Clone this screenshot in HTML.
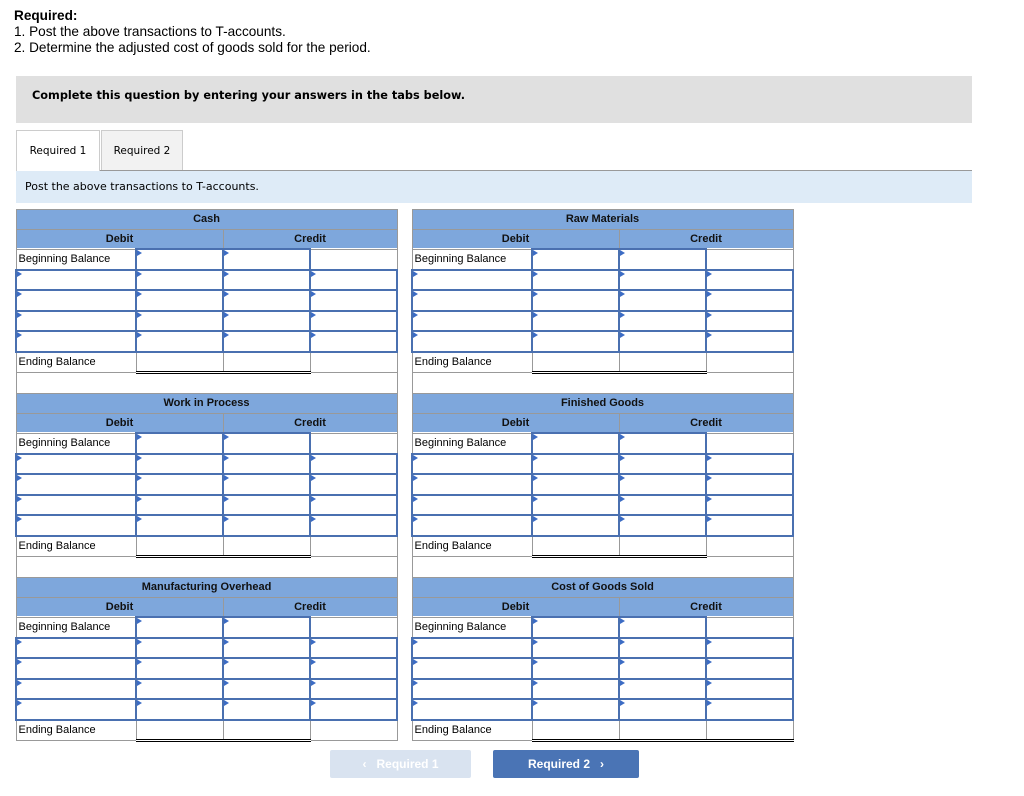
<!DOCTYPE html>
<html><head><meta charset="utf-8"><style>
body{margin:0;background:#fff;font-family:"Liberation Sans",Arial,sans-serif;color:#000;width:1024px;height:796px;position:relative;overflow:hidden}
.top{position:absolute;left:14px;top:8px;font-size:13.6px;line-height:16px}
.banner{position:absolute;left:16px;top:76px;width:956px;height:47px;background:#e0e0e0;font-family:"DejaVu Sans",sans-serif;font-weight:bold;font-size:11.3px;line-height:40px;text-indent:16px}
.tab{position:absolute;top:130px;height:41px;font-family:"DejaVu Sans",sans-serif;font-size:10.5px;line-height:41px;text-align:center;border:1px solid #ccc;border-bottom:none;box-sizing:border-box}
.tabline{position:absolute;left:16px;top:170px;width:956px;height:1px;background:#999}
.post{position:absolute;left:16px;top:171px;width:956px;height:32px;background:#deebf7;font-family:"DejaVu Sans",sans-serif;font-size:11px;line-height:32px;text-indent:9px}
table.t{position:absolute;width:381px;border-collapse:collapse;table-layout:fixed;font-size:11px}
table.t td{height:18.5px;line-height:18px;border:1px solid #999;padding:0 2px;white-space:nowrap;overflow:hidden}
td.h{background:#7ea7dc;font-weight:bold;text-align:center;color:#111}
td.i{border:2px solid #4a70b0!important;position:relative;background:#fff}
td.i::before{content:"";position:absolute;left:0;top:0;border-left:5px solid #3c6cc4;border-top:3px solid transparent;border-bottom:3px solid transparent}
td.d{border-bottom:3px double #000!important}
.btn{position:absolute;top:750px;height:28px;font-size:12px;font-weight:bold;color:#fff;text-align:center;line-height:28px;border-radius:2px}
</style></head><body>
<div class="top"><b>Required:</b><br>1. Post the above transactions to T-accounts.<br>2. Determine the adjusted cost of goods sold for the period.</div>
<div class="banner">Complete this question by entering your answers in the tabs below.</div>
<div class="tab" style="left:16px;width:84px;background:#fff;height:42px">Required 1</div>
<div class="tab" style="left:101px;width:82px;background:#f2f2f2">Required 2</div>
<div class="tabline" style="left:100px;width:872px"></div>
<div class="post">Post the above transactions to T-accounts.</div>

<table class="t" style="left:15px;top:209px"><colgroup><col style="width:120px"><col style="width:87px"><col style="width:87px"><col style="width:87px"></colgroup>
<tr><td class="h" colspan="4">Cash</td></tr>
<tr><td class="h" colspan="2">Debit</td><td class="h" colspan="2">Credit</td></tr>
<tr><td>Beginning Balance</td><td class="i"></td><td class="i"></td><td></td></tr>
<tr><td class="i"></td><td class="i"></td><td class="i"></td><td class="i"></td></tr>
<tr><td class="i"></td><td class="i"></td><td class="i"></td><td class="i"></td></tr>
<tr><td class="i"></td><td class="i"></td><td class="i"></td><td class="i"></td></tr>
<tr><td class="i"></td><td class="i"></td><td class="i"></td><td class="i"></td></tr>
<tr><td>Ending Balance</td><td class="d"></td><td class="d"></td><td></td></tr>
<tr><td colspan="4"></td></tr></table>

<table class="t" style="left:411px;top:209px"><colgroup><col style="width:120px"><col style="width:87px"><col style="width:87px"><col style="width:87px"></colgroup>
<tr><td class="h" colspan="4">Raw Materials</td></tr>
<tr><td class="h" colspan="2">Debit</td><td class="h" colspan="2">Credit</td></tr>
<tr><td>Beginning Balance</td><td class="i"></td><td class="i"></td><td></td></tr>
<tr><td class="i"></td><td class="i"></td><td class="i"></td><td class="i"></td></tr>
<tr><td class="i"></td><td class="i"></td><td class="i"></td><td class="i"></td></tr>
<tr><td class="i"></td><td class="i"></td><td class="i"></td><td class="i"></td></tr>
<tr><td class="i"></td><td class="i"></td><td class="i"></td><td class="i"></td></tr>
<tr><td>Ending Balance</td><td class="d"></td><td class="d"></td><td></td></tr>
<tr><td colspan="4"></td></tr></table>

<table class="t" style="left:15px;top:393px"><colgroup><col style="width:120px"><col style="width:87px"><col style="width:87px"><col style="width:87px"></colgroup>
<tr><td class="h" colspan="4">Work in Process</td></tr>
<tr><td class="h" colspan="2">Debit</td><td class="h" colspan="2">Credit</td></tr>
<tr><td>Beginning Balance</td><td class="i"></td><td class="i"></td><td></td></tr>
<tr><td class="i"></td><td class="i"></td><td class="i"></td><td class="i"></td></tr>
<tr><td class="i"></td><td class="i"></td><td class="i"></td><td class="i"></td></tr>
<tr><td class="i"></td><td class="i"></td><td class="i"></td><td class="i"></td></tr>
<tr><td class="i"></td><td class="i"></td><td class="i"></td><td class="i"></td></tr>
<tr><td>Ending Balance</td><td class="d"></td><td class="d"></td><td></td></tr>
<tr><td colspan="4"></td></tr></table>

<table class="t" style="left:411px;top:393px"><colgroup><col style="width:120px"><col style="width:87px"><col style="width:87px"><col style="width:87px"></colgroup>
<tr><td class="h" colspan="4">Finished Goods</td></tr>
<tr><td class="h" colspan="2">Debit</td><td class="h" colspan="2">Credit</td></tr>
<tr><td>Beginning Balance</td><td class="i"></td><td class="i"></td><td></td></tr>
<tr><td class="i"></td><td class="i"></td><td class="i"></td><td class="i"></td></tr>
<tr><td class="i"></td><td class="i"></td><td class="i"></td><td class="i"></td></tr>
<tr><td class="i"></td><td class="i"></td><td class="i"></td><td class="i"></td></tr>
<tr><td class="i"></td><td class="i"></td><td class="i"></td><td class="i"></td></tr>
<tr><td>Ending Balance</td><td class="d"></td><td class="d"></td><td></td></tr>
<tr><td colspan="4"></td></tr></table>

<table class="t" style="left:15px;top:577px"><colgroup><col style="width:120px"><col style="width:87px"><col style="width:87px"><col style="width:87px"></colgroup>
<tr><td class="h" colspan="4">Manufacturing Overhead</td></tr>
<tr><td class="h" colspan="2">Debit</td><td class="h" colspan="2">Credit</td></tr>
<tr><td>Beginning Balance</td><td class="i"></td><td class="i"></td><td></td></tr>
<tr><td class="i"></td><td class="i"></td><td class="i"></td><td class="i"></td></tr>
<tr><td class="i"></td><td class="i"></td><td class="i"></td><td class="i"></td></tr>
<tr><td class="i"></td><td class="i"></td><td class="i"></td><td class="i"></td></tr>
<tr><td class="i"></td><td class="i"></td><td class="i"></td><td class="i"></td></tr>
<tr><td>Ending Balance</td><td class="d"></td><td class="d"></td><td></td></tr></table>

<table class="t" style="left:411px;top:577px"><colgroup><col style="width:120px"><col style="width:87px"><col style="width:87px"><col style="width:87px"></colgroup>
<tr><td class="h" colspan="4">Cost of Goods Sold</td></tr>
<tr><td class="h" colspan="2">Debit</td><td class="h" colspan="2">Credit</td></tr>
<tr><td>Beginning Balance</td><td class="i"></td><td class="i"></td><td></td></tr>
<tr><td class="i"></td><td class="i"></td><td class="i"></td><td class="i"></td></tr>
<tr><td class="i"></td><td class="i"></td><td class="i"></td><td class="i"></td></tr>
<tr><td class="i"></td><td class="i"></td><td class="i"></td><td class="i"></td></tr>
<tr><td class="i"></td><td class="i"></td><td class="i"></td><td class="i"></td></tr>
<tr><td>Ending Balance</td><td class="d"></td><td class="d"></td><td class="d"></td></tr></table>

<div class="btn" style="left:330px;width:141px;background:#d9e3f0">&lsaquo;&nbsp;&nbsp; Required 1</div>
<div class="btn" style="left:493px;width:146px;background:#4a74b5">Required 2 &nbsp;&nbsp;&rsaquo;</div>
</body></html>
